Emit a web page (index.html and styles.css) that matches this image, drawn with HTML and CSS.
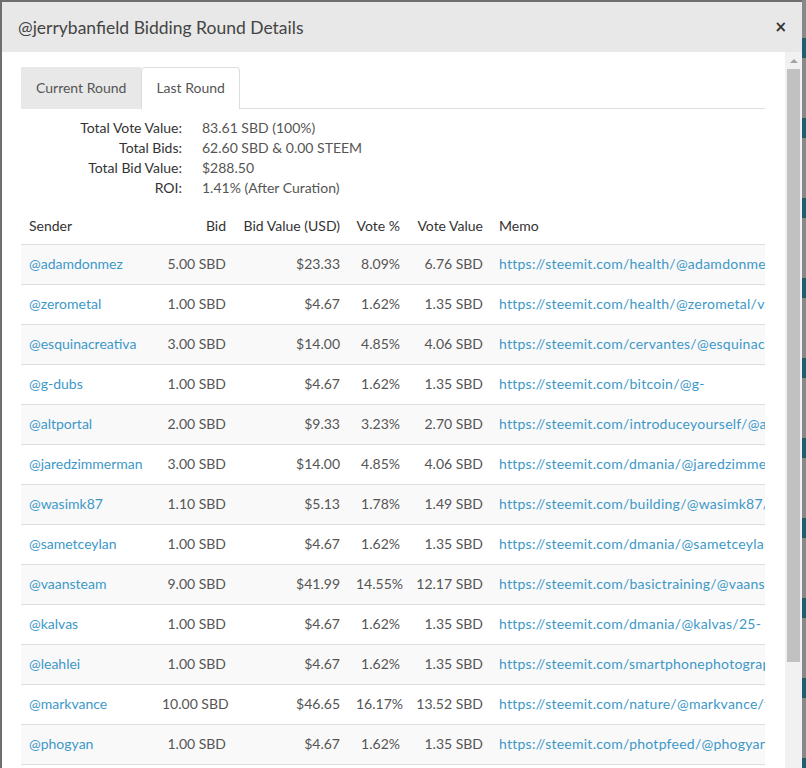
FILE: index.html
```html
<!DOCTYPE html>
<html>
<head>
<meta charset="utf-8">
<link rel="stylesheet" href="styles.css">
</head>
<body>
<div class="page">
  <div class="modal">
    <div class="modal-header">
      <h4 class="modal-title">@jerrybanfield Bidding Round Details</h4>
      <span class="close">&times;</span>
    </div>
    <div class="modal-body">
      <div class="content">
        <ul class="tabs">
          <li class="tab">Current Round</li>
          <li class="tab active">Last Round</li>
        </ul>
        <dl class="summary">
          <dt>Total Vote Value:</dt><dd>83.61 SBD (100%)</dd>
          <dt>Total Bids:</dt><dd>62.60 SBD &amp; 0.00 STEEM</dd>
          <dt>Total Bid Value:</dt><dd>$288.50</dd>
          <dt>ROI:</dt><dd>1.41% (After Curation)</dd>
        </dl>
        <table class="bids">
          <colgroup>
            <col class="c-sender"><col class="c-bid"><col class="c-usd"><col class="c-pct"><col class="c-val"><col class="c-memo">
          </colgroup>
          <thead>
            <tr><th>Sender</th><th class="r">Bid</th><th class="r">Bid Value (USD)</th><th class="r">Vote %</th><th class="r">Vote Value</th><th>Memo</th></tr>
          </thead>
          <tbody>
            <tr><td><a>@adamdonmez</a></td><td class="r">5.00 SBD</td><td class="r">$23.33</td><td class="r">8.09%</td><td class="r">6.76 SBD</td><td class="m"><div class="memo"><a>https://steemit.com/health/@adamdonmez/healthy-life</a></div></td></tr>
            <tr><td><a>@zerometal</a></td><td class="r">1.00 SBD</td><td class="r">$4.67</td><td class="r">1.62%</td><td class="r">1.35 SBD</td><td class="m"><div class="memo"><a>https://steemit.com/health/@zerometal/vitamins</a></div></td></tr>
            <tr><td><a>@esquinacreativa</a></td><td class="r">3.00 SBD</td><td class="r">$14.00</td><td class="r">4.85%</td><td class="r">4.06 SBD</td><td class="m"><div class="memo"><a>https://steemit.com/cervantes/@esquinacreativa/poema</a></div></td></tr>
            <tr><td><a>@g-dubs</a></td><td class="r">1.00 SBD</td><td class="r">$4.67</td><td class="r">1.62%</td><td class="r">1.35 SBD</td><td class="m"><div class="memo"><a>https://steemit.com/bitcoin/@g-</a></div></td></tr>
            <tr><td><a>@altportal</a></td><td class="r">2.00 SBD</td><td class="r">$9.33</td><td class="r">3.23%</td><td class="r">2.70 SBD</td><td class="m"><div class="memo"><a>https://steemit.com/introduceyourself/@altportal/hello</a></div></td></tr>
            <tr><td><a>@jaredzimmerman</a></td><td class="r">3.00 SBD</td><td class="r">$14.00</td><td class="r">4.85%</td><td class="r">4.06 SBD</td><td class="m"><div class="memo"><a>https://steemit.com/dmania/@jaredzimmerman/meme</a></div></td></tr>
            <tr><td><a>@wasimk87</a></td><td class="r">1.10 SBD</td><td class="r">$5.13</td><td class="r">1.78%</td><td class="r">1.49 SBD</td><td class="m"><div class="memo"><a>https://steemit.com/building/@wasimk87/house</a></div></td></tr>
            <tr><td><a>@sametceylan</a></td><td class="r">1.00 SBD</td><td class="r">$4.67</td><td class="r">1.62%</td><td class="r">1.35 SBD</td><td class="m"><div class="memo"><a>https://steemit.com/dmania/@sametceylan/funny</a></div></td></tr>
            <tr><td><a>@vaansteam</a></td><td class="r">9.00 SBD</td><td class="r">$41.99</td><td class="r">14.55%</td><td class="r">12.17 SBD</td><td class="m"><div class="memo"><a>https://steemit.com/basictraining/@vaansteam/lesson</a></div></td></tr>
            <tr><td><a>@kalvas</a></td><td class="r">1.00 SBD</td><td class="r">$4.67</td><td class="r">1.62%</td><td class="r">1.35 SBD</td><td class="m"><div class="memo"><a>https://steemit.com/dmania/@kalvas/25-</a></div></td></tr>
            <tr><td><a>@leahlei</a></td><td class="r">1.00 SBD</td><td class="r">$4.67</td><td class="r">1.62%</td><td class="r">1.35 SBD</td><td class="m"><div class="memo"><a>https://steemit.com/smartphonephotography/@leahlei</a></div></td></tr>
            <tr><td><a>@markvance</a></td><td class="r">10.00 SBD</td><td class="r">$46.65</td><td class="r">16.17%</td><td class="r">13.52 SBD</td><td class="m"><div class="memo"><a>https://steemit.com/nature/@markvance/forest</a></div></td></tr>
            <tr><td><a>@phogyan</a></td><td class="r">1.00 SBD</td><td class="r">$4.67</td><td class="r">1.62%</td><td class="r">1.35 SBD</td><td class="m"><div class="memo"><a>https://steemit.com/photpfeed/@phogyan/photo</a></div></td></tr>
            <tr><td><a>@steemit</a></td><td class="r">1.00 SBD</td><td class="r">$4.67</td><td class="r">1.62%</td><td class="r">1.35 SBD</td><td class="m"><div class="memo"><a>https://steemit.com/life/@steemit/post</a></div></td></tr>
          </tbody>
        </table>
      </div>
      <div class="scrollbar">
        <div class="sb-arrow"></div>
        <div class="sb-thumb"></div>
      </div>
    </div>
  </div>
  <div class="edge"></div>
</div>
</body>
</html>
```
FILE: styles.css
```css
html, body {
  margin: 0;
  padding: 0;
  height: 768px;
  overflow: hidden;
}
body {
  background: #6f6f6f;
  font-family: Lato, "Liberation Sans", sans-serif;
  font-size: 14px;
  color: #555;
}
.page {
  display: flex;
  padding: 2px 0 0 2px;
  height: 766px;
}
.modal {
  width: 800px;
  flex: none;
  background: #fff;
  display: flex;
  flex-direction: column;
}
.edge {
  flex: 1;
  margin-top: -2px;
  background: repeating-linear-gradient(180deg, #888 0 38px, #1c6070 38px 58px, #888 58px 80px);
}
.modal-header {
  height: 50px;
  background: #e8e8e8;
  display: flex;
  align-items: center;
  justify-content: space-between;
  padding: 0 15px 0 16px;
  flex: none;
}
.modal-title {
  margin: 0;
  font-size: 17.5px;
  font-weight: 400;
  color: #444;
}
.close {
  font-family: "DejaVu Sans", sans-serif;
  font-size: 15px;
  font-weight: 700;
  color: #333;
  line-height: 1;
}
.modal-body {
  flex: 1;
  display: flex;
  overflow: hidden;
}
.content {
  flex: 1;
  padding: 15px 20px 0 19px;
  overflow: hidden;
}
.scrollbar {
  width: 17px;
  flex: none;
  background: #f1f1f1;
  display: flex;
  flex-direction: column;
  align-items: center;
}
.sb-arrow {
  margin-top: 7px;
  width: 0;
  height: 0;
  border-left: 4px solid transparent;
  border-right: 4px solid transparent;
  border-bottom: 4px solid #a3a3a3;
}
.sb-thumb {
  margin-top: 6px;
  width: 13px;
  height: 593px;
  background: #c1c1c1;
}
.tabs {
  list-style: none;
  margin: 0;
  padding: 0;
  display: flex;
  border-bottom: 1px solid #ddd;
}
.tab {
  padding: 10px 14px 10px;
  line-height: 20px;
  background: #e8e8e8;
  color: #555;
  border: 1px solid transparent;
  border-bottom: none;
  margin-bottom: -1px;
}
.tab.active {
  background: #fff;
  border-color: #ddd;
  border-radius: 4px 4px 0 0;
  padding-bottom: 11px;
}
.summary {
  margin: 9px 0 9px;
  display: grid;
  grid-template-columns: 161px 1fr;
  column-gap: 20px;
  line-height: 20px;
}
.summary dt {
  text-align: right;
  color: #333;
}
.summary dd {
  margin: 0;
}
.bids {
  width: 744px;
  table-layout: fixed;
  border-collapse: collapse;
}
.c-sender { width: 133px; }
.c-bid { width: 80px; }
.c-usd { width: 114px; }
.c-pct { width: 60px; }
.c-val { width: 83px; }
.c-memo { width: 274px; }
.bids th {
  font-weight: 400;
  color: #333;
  text-align: left;
  padding: 9px 8px 8px;
  line-height: 20px;
  border-bottom: 1px solid #ddd;
  white-space: nowrap;
}
.bids td {
  padding: 8px 8px 10px;
  line-height: 21px;
  border-bottom: 1px solid #ddd;
  white-space: nowrap;
}
.bids td.m {
  padding-right: 0;
}
.bids tbody tr:nth-child(odd) {
  background: #f9f9f9;
}
.bids .r {
  text-align: right;
}
.bids a {
  color: #3d98c8;
}
.memo {
  overflow: hidden;
  white-space: nowrap;
  letter-spacing: 0.25px;
}
```
